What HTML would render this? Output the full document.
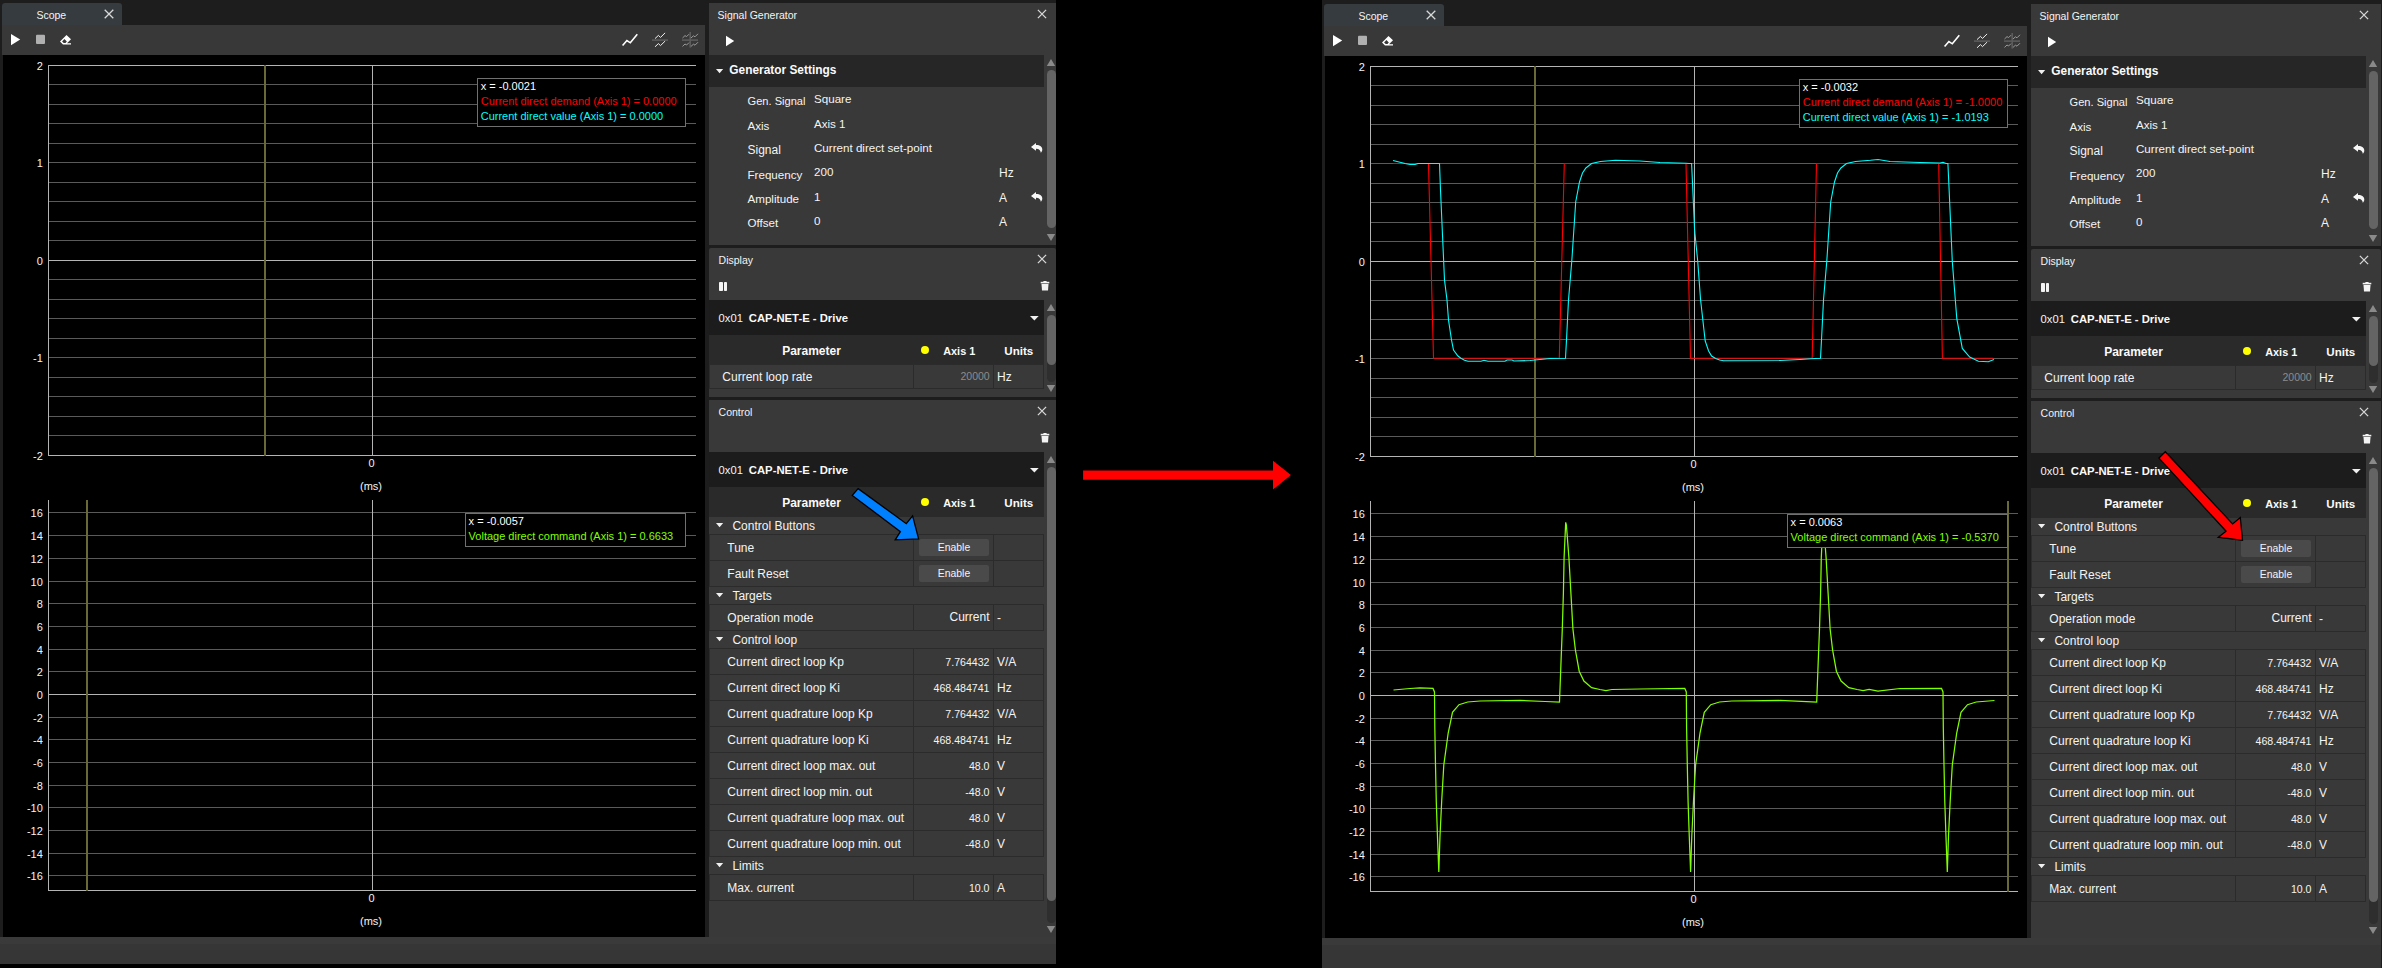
<!DOCTYPE html>
<html><head><meta charset="utf-8"><style>
html,body{margin:0;padding:0;background:#000;}
body{width:2382px;height:968px;position:relative;overflow:hidden;font-family:"Liberation Sans", sans-serif;}
div{position:absolute;box-sizing:border-box;}
.t{white-space:nowrap;}
svg{position:absolute;overflow:visible;}
</style></head><body>
<div style="left:0.00px;top:0.00px;width:1056.00px;height:964.00px;background:#1d1d1d;"></div><div style="left:0.00px;top:937.00px;width:1056.00px;height:7.00px;background:#3a3a3a;"></div><div style="left:0.00px;top:944.00px;width:1056.00px;height:20.00px;background:#363636;"></div><div style="left:2.00px;top:3.00px;width:120.00px;height:22.00px;background:#353b3e;border-radius:3px 3px 0 0;"></div><div class="t" style="left:36.40px;top:9.91px;font-size:10.5px;line-height:10.5px;color:#f4f4f4;">Scope</div><svg style="left:100px;top:5px;" width="18" height="18" viewBox="100 5 18 18"><path d="M104.7 9.7 L113.3 18.3 M113.3 9.7 L104.7 18.3" stroke="#d8d8d8" stroke-width="1.3"/></svg><div style="left:2.00px;top:25.00px;width:703.00px;height:30.00px;background:#383838;"></div><svg style="left:0px;top:25px;" width="100" height="30" viewBox="0 25 100 30"><path d="M11 34 L20.2 39.5 L11 45.2 Z" fill="#fff"/><rect x="36" y="34.7" width="9" height="9.4" rx="1" fill="#b0b0b0"/><path d="M60 41.4 L66.5 34.9 L71 39.3 L67 43.3 L71 43.3 L71 44.4 L63 44.4 Z" fill="#fff"/><path d="M62.1 41.4 L64.4 39.1 L66.8 41.5 L65.5 43 L63.7 43 Z" fill="#383838"/></svg><svg style="left:610px;top:25px;" width="95" height="30" viewBox="610 25 95 30"><path d="M622.6 45.6 L626.9 40.6 L630.3 42.8 L637.3 34.2" stroke="#fff" stroke-width="1.6" fill="none"/><rect x="652" y="39.3" width="16" height="1.6" fill="#5c5c5c"/><path d="M655 38.6 L658.4 35.4 L660.5 37.4 L665.1 32.9 M655 46.8 L658.4 43.6 L660.5 45.6 L665.1 41.1" stroke="#f0f0f0" stroke-width="1" fill="none"/><rect x="682" y="39.3" width="16" height="1.6" fill="#5c5c5c"/><rect x="689.4" y="32" width="1.6" height="15.6" fill="#5c5c5c"/><path d="M682.5 38 L685 35.6 L686.6 36.6 L689 34.2 M691 38 L693.4 35.8 L695 36.8 L698 33.8 M682.5 46.4 L685 44 L686.6 45 L689 42.6 M691 46.4 L693.4 44.2 L695 45.2 L698 42.2" stroke="#9a9a9a" stroke-width="1" fill="none"/></svg><div style="left:3.00px;top:55.00px;width:702.00px;height:882.00px;background:#000;"></div><div style="left:48.00px;top:84.00px;width:648.00px;height:1.00px;background:#5a5a5a;"></div><div style="left:48.00px;top:104.00px;width:648.00px;height:1.00px;background:#5a5a5a;"></div><div style="left:48.00px;top:123.00px;width:648.00px;height:1.00px;background:#5a5a5a;"></div><div style="left:48.00px;top:143.00px;width:648.00px;height:1.00px;background:#5a5a5a;"></div><div style="left:48.00px;top:162.00px;width:648.00px;height:1.00px;background:#5a5a5a;"></div><div style="left:48.00px;top:182.00px;width:648.00px;height:1.00px;background:#5a5a5a;"></div><div style="left:48.00px;top:201.00px;width:648.00px;height:1.00px;background:#5a5a5a;"></div><div style="left:48.00px;top:221.00px;width:648.00px;height:1.00px;background:#5a5a5a;"></div><div style="left:48.00px;top:240.00px;width:648.00px;height:1.00px;background:#5a5a5a;"></div><div style="left:48.00px;top:260.00px;width:648.00px;height:1.00px;background:#b4b4b4;"></div><div style="left:48.00px;top:279.00px;width:648.00px;height:1.00px;background:#5a5a5a;"></div><div style="left:48.00px;top:299.00px;width:648.00px;height:1.00px;background:#5a5a5a;"></div><div style="left:48.00px;top:318.00px;width:648.00px;height:1.00px;background:#5a5a5a;"></div><div style="left:48.00px;top:338.00px;width:648.00px;height:1.00px;background:#5a5a5a;"></div><div style="left:48.00px;top:357.00px;width:648.00px;height:1.00px;background:#5a5a5a;"></div><div style="left:48.00px;top:377.00px;width:648.00px;height:1.00px;background:#5a5a5a;"></div><div style="left:48.00px;top:396.00px;width:648.00px;height:1.00px;background:#5a5a5a;"></div><div style="left:48.00px;top:416.00px;width:648.00px;height:1.00px;background:#5a5a5a;"></div><div style="left:48.00px;top:435.00px;width:648.00px;height:1.00px;background:#5a5a5a;"></div><div style="left:48.00px;top:65.00px;width:648.00px;height:1.00px;background:#b4b4b4;"></div><div style="left:48.00px;top:455.00px;width:648.00px;height:1.00px;background:#b4b4b4;"></div><div style="left:48.00px;top:65.00px;width:1.00px;height:391.00px;background:#b4b4b4;"></div><div style="left:372.00px;top:65.00px;width:1.00px;height:391.00px;background:#b4b4b4;"></div><div class="t" style="left:-957.20px;width:1000px;text-align:right;top:60.99px;font-size:11px;line-height:11px;color:#f4f4f4;">2</div><div class="t" style="left:-957.20px;width:1000px;text-align:right;top:157.99px;font-size:11px;line-height:11px;color:#f4f4f4;">1</div><div class="t" style="left:-957.20px;width:1000px;text-align:right;top:255.99px;font-size:11px;line-height:11px;color:#f4f4f4;">0</div><div class="t" style="left:-957.20px;width:1000px;text-align:right;top:352.99px;font-size:11px;line-height:11px;color:#f4f4f4;">-1</div><div class="t" style="left:-957.20px;width:1000px;text-align:right;top:450.99px;font-size:11px;line-height:11px;color:#f4f4f4;">-2</div><div class="t" style="left:-128.50px;width:1000px;text-align:center;top:458.19px;font-size:11px;line-height:11px;color:#f4f4f4;">0</div><div class="t" style="left:-129.00px;width:1000px;text-align:center;top:481.19px;font-size:11px;line-height:11px;color:#f4f4f4;">(ms)</div><div style="left:48.00px;top:512.00px;width:648.00px;height:1.00px;background:#5a5a5a;"></div><div class="t" style="left:-957.20px;width:1000px;text-align:right;top:507.99px;font-size:11px;line-height:11px;color:#f4f4f4;">16</div><div style="left:48.00px;top:535.00px;width:648.00px;height:1.00px;background:#5a5a5a;"></div><div class="t" style="left:-957.20px;width:1000px;text-align:right;top:530.99px;font-size:11px;line-height:11px;color:#f4f4f4;">14</div><div style="left:48.00px;top:558.00px;width:648.00px;height:1.00px;background:#5a5a5a;"></div><div class="t" style="left:-957.20px;width:1000px;text-align:right;top:553.99px;font-size:11px;line-height:11px;color:#f4f4f4;">12</div><div style="left:48.00px;top:581.00px;width:648.00px;height:1.00px;background:#5a5a5a;"></div><div class="t" style="left:-957.20px;width:1000px;text-align:right;top:576.99px;font-size:11px;line-height:11px;color:#f4f4f4;">10</div><div style="left:48.00px;top:603.00px;width:648.00px;height:1.00px;background:#5a5a5a;"></div><div class="t" style="left:-957.20px;width:1000px;text-align:right;top:598.99px;font-size:11px;line-height:11px;color:#f4f4f4;">8</div><div style="left:48.00px;top:626.00px;width:648.00px;height:1.00px;background:#5a5a5a;"></div><div class="t" style="left:-957.20px;width:1000px;text-align:right;top:621.99px;font-size:11px;line-height:11px;color:#f4f4f4;">6</div><div style="left:48.00px;top:649.00px;width:648.00px;height:1.00px;background:#5a5a5a;"></div><div class="t" style="left:-957.20px;width:1000px;text-align:right;top:644.99px;font-size:11px;line-height:11px;color:#f4f4f4;">4</div><div style="left:48.00px;top:671.00px;width:648.00px;height:1.00px;background:#5a5a5a;"></div><div class="t" style="left:-957.20px;width:1000px;text-align:right;top:666.99px;font-size:11px;line-height:11px;color:#f4f4f4;">2</div><div style="left:48.00px;top:694.00px;width:648.00px;height:1.00px;background:#b4b4b4;"></div><div class="t" style="left:-957.20px;width:1000px;text-align:right;top:689.99px;font-size:11px;line-height:11px;color:#f4f4f4;">0</div><div style="left:48.00px;top:717.00px;width:648.00px;height:1.00px;background:#5a5a5a;"></div><div class="t" style="left:-957.20px;width:1000px;text-align:right;top:712.99px;font-size:11px;line-height:11px;color:#f4f4f4;">-2</div><div style="left:48.00px;top:739.00px;width:648.00px;height:1.00px;background:#5a5a5a;"></div><div class="t" style="left:-957.20px;width:1000px;text-align:right;top:734.99px;font-size:11px;line-height:11px;color:#f4f4f4;">-4</div><div style="left:48.00px;top:762.00px;width:648.00px;height:1.00px;background:#5a5a5a;"></div><div class="t" style="left:-957.20px;width:1000px;text-align:right;top:757.99px;font-size:11px;line-height:11px;color:#f4f4f4;">-6</div><div style="left:48.00px;top:785.00px;width:648.00px;height:1.00px;background:#5a5a5a;"></div><div class="t" style="left:-957.20px;width:1000px;text-align:right;top:780.99px;font-size:11px;line-height:11px;color:#f4f4f4;">-8</div><div style="left:48.00px;top:807.00px;width:648.00px;height:1.00px;background:#5a5a5a;"></div><div class="t" style="left:-957.20px;width:1000px;text-align:right;top:802.99px;font-size:11px;line-height:11px;color:#f4f4f4;">-10</div><div style="left:48.00px;top:830.00px;width:648.00px;height:1.00px;background:#5a5a5a;"></div><div class="t" style="left:-957.20px;width:1000px;text-align:right;top:825.99px;font-size:11px;line-height:11px;color:#f4f4f4;">-12</div><div style="left:48.00px;top:853.00px;width:648.00px;height:1.00px;background:#5a5a5a;"></div><div class="t" style="left:-957.20px;width:1000px;text-align:right;top:848.99px;font-size:11px;line-height:11px;color:#f4f4f4;">-14</div><div style="left:48.00px;top:875.00px;width:648.00px;height:1.00px;background:#5a5a5a;"></div><div class="t" style="left:-957.20px;width:1000px;text-align:right;top:870.99px;font-size:11px;line-height:11px;color:#f4f4f4;">-16</div><div style="left:48.00px;top:890.00px;width:648.00px;height:1.00px;background:#b4b4b4;"></div><div style="left:48.00px;top:500.00px;width:1.00px;height:391.00px;background:#b4b4b4;"></div><div style="left:372.00px;top:500.00px;width:1.00px;height:391.00px;background:#b4b4b4;"></div><div class="t" style="left:-128.50px;width:1000px;text-align:center;top:893.19px;font-size:11px;line-height:11px;color:#f4f4f4;">0</div><div class="t" style="left:-129.00px;width:1000px;text-align:center;top:916.19px;font-size:11px;line-height:11px;color:#f4f4f4;">(ms)</div><div style="left:264.00px;top:65.00px;width:2.00px;height:391.00px;background:#6a6a36;"></div><div style="left:86.00px;top:500.00px;width:2.00px;height:391.00px;background:#6a6a36;"></div><div style="left:709.00px;top:3.00px;width:347.00px;height:242.00px;background:#393939;"></div><div style="left:709.00px;top:248.00px;width:347.00px;height:149.00px;background:#393939;border-radius:2px 2px 0 0;"></div><div style="left:709.00px;top:400.00px;width:347.00px;height:537.00px;background:#393939;"></div><div class="t" style="left:717.60px;top:9.81px;font-size:10.5px;line-height:10.5px;color:#f4f4f4;">Signal Generator</div><svg style="left:1035.9px;top:7.9px;" width="12" height="12" viewBox="1035.9 7.9 12 12"><path d="M1037.8000000000002 9.8 L1046.0 18.0 M1046.0 9.8 L1037.8000000000002 18.0" stroke="#d8d8d8" stroke-width="1.3"/></svg><svg style="left:724px;top:34px;" width="12" height="14" viewBox="724 34 12 14"><path d="M726 35.8 L734.2 41 L726 46.2 Z" fill="#fff"/></svg><div style="left:709.00px;top:55.00px;width:335.00px;height:32.00px;background:#262626;"></div><svg style="left:715px;top:68.3px;" width="9.2" height="6.2" viewBox="715 68.3 9.2 6.2"><path d="M716 69.3 L723.2 69.3 L719.6 73.5 Z" fill="#f0f0f0"/></svg><div class="t" style="left:729.30px;top:64.73px;font-size:11.9px;line-height:11.9px;color:#fafafa;font-weight:bold;">Generator Settings</div><div class="t" style="left:747.50px;top:96.30px;font-size:11.1px;line-height:11.1px;color:#f4f4f4;">Gen. Signal</div><div class="t" style="left:814.00px;top:93.48px;font-size:11.6px;line-height:11.6px;color:#f4f4f4;">Square</div><div class="t" style="left:747.50px;top:120.18px;font-size:11.6px;line-height:11.6px;color:#f4f4f4;">Axis</div><div class="t" style="left:814.00px;top:117.78px;font-size:11.6px;line-height:11.6px;color:#f4f4f4;">Axis 1</div><div class="t" style="left:747.50px;top:144.14px;font-size:12px;line-height:12px;color:#f4f4f4;">Signal</div><div class="t" style="left:814.00px;top:142.08px;font-size:11.6px;line-height:11.6px;color:#f4f4f4;">Current direct set-point</div><div class="t" style="left:747.50px;top:168.78px;font-size:11.6px;line-height:11.6px;color:#f4f4f4;">Frequency</div><div class="t" style="left:814.00px;top:166.38px;font-size:11.6px;line-height:11.6px;color:#f4f4f4;">200</div><div class="t" style="left:999.10px;top:167.24px;font-size:12px;line-height:12px;color:#f4f4f4;">Hz</div><div class="t" style="left:747.50px;top:193.08px;font-size:11.6px;line-height:11.6px;color:#f4f4f4;">Amplitude</div><div class="t" style="left:814.00px;top:190.68px;font-size:11.6px;line-height:11.6px;color:#f4f4f4;">1</div><div class="t" style="left:999.10px;top:191.54px;font-size:12px;line-height:12px;color:#f4f4f4;">A</div><div class="t" style="left:747.50px;top:217.38px;font-size:11.6px;line-height:11.6px;color:#f4f4f4;">Offset</div><div class="t" style="left:814.00px;top:214.98px;font-size:11.6px;line-height:11.6px;color:#f4f4f4;">0</div><div class="t" style="left:999.10px;top:215.84px;font-size:12px;line-height:12px;color:#f4f4f4;">A</div><svg style="left:1029.7px;top:141.5px;" width="14" height="12" viewBox="1029.7 141.5 14 12"><path d="M1030.7 146.5 L1035.7 142.5 L1035.7 144.4 C1039.5 144.3 1042.2 146.0 1042.0 149.2 C1041.9 150.5 1041.2 151.5 1040.5 152.3 C1040.3 150.0 1039.0 148.2 1035.7 148.2 L1035.7 150.2 Z" fill="#f8f8f8"/></svg><svg style="left:1029.7px;top:190.5px;" width="14" height="12" viewBox="1029.7 190.5 14 12"><path d="M1030.7 195.5 L1035.7 191.5 L1035.7 193.4 C1039.5 193.3 1042.2 195.0 1042.0 198.2 C1041.9 199.5 1041.2 200.5 1040.5 201.3 C1040.3 199.0 1039.0 197.2 1035.7 197.2 L1035.7 199.2 Z" fill="#f8f8f8"/></svg><svg style="left:1045px;top:58.3px;" width="12" height="9" viewBox="1045 58.3 12 9"><path d="M1046.8 66.3 L1055.2 66.3 L1051 59.3 Z" fill="#8a8a8a"/></svg><div style="left:1047.00px;top:69.80px;width:9.00px;height:158.20px;background:#646464;border-radius:4.5px;"></div><svg style="left:1045px;top:232.5px;" width="12" height="9" viewBox="1045 232.5 12 9"><path d="M1046.8 233.5 L1055.2 233.5 L1051 240.5 Z" fill="#8a8a8a"/></svg><div class="t" style="left:718.60px;top:255.11px;font-size:10.5px;line-height:10.5px;color:#f4f4f4;">Display</div><svg style="left:1035.8px;top:253.39999999999998px;" width="12" height="12" viewBox="1035.8 253.39999999999998 12 12"><path d="M1037.7 255.29999999999998 L1045.8999999999999 263.5 M1045.8999999999999 255.29999999999998 L1037.7 263.5" stroke="#d8d8d8" stroke-width="1.3"/></svg><div style="left:719.00px;top:281.60px;width:3.60px;height:9.00px;background:#f4f4f4;border-radius:0.8px;"></div><div style="left:723.70px;top:281.60px;width:3.60px;height:9.00px;background:#f4f4f4;border-radius:0.8px;"></div><svg style="left:1038.7px;top:280.2px;" width="12" height="12" viewBox="1038.7 280.2 12 12"><rect x="1040.4" y="282.0" width="8.6" height="1.6" fill="#f4f4f4"/><rect x="1043.1000000000001" y="281.2" width="3.2" height="1.2" fill="#f4f4f4"/><path d="M1041.2 284.2 L1048.2 284.2 L1047.7 290.8 L1041.7 290.8 Z" fill="#f4f4f4"/></svg><div style="left:709.00px;top:300.00px;width:335.00px;height:34.50px;background:#1c1c1c;"></div><div class="t" style="left:718.60px;top:312.62px;font-size:11.2px;line-height:11.2px;color:#f4f4f4;">0x01</div><div class="t" style="left:748.80px;top:312.53px;font-size:11.3px;line-height:11.3px;color:#fafafa;font-weight:bold;">CAP-NET-E - Drive</div><svg style="left:1028.8px;top:314.9px;" width="10.7" height="6.4" viewBox="1028.8 314.9 10.7 6.4"><path d="M1029.8 315.9 L1038.5 315.9 L1034.1499999999999 320.29999999999995 Z" fill="#f0f0f0"/></svg><div style="left:709.00px;top:335.00px;width:335.00px;height:29.50px;background:#2a2a2a;"></div><div class="t" style="left:311.50px;width:1000px;text-align:center;top:344.64px;font-size:12px;line-height:12px;color:#fafafa;font-weight:bold;">Parameter</div><div style="left:920.6px;top:345.8px;width:8.6px;height:8.6px;border-radius:50%;background:#ffff00;"></div><div class="t" style="left:943.20px;top:345.57px;font-size:10.9px;line-height:10.9px;color:#fafafa;font-weight:bold;">Axis 1</div><div class="t" style="left:1004.30px;top:344.98px;font-size:11.6px;line-height:11.6px;color:#fafafa;font-weight:bold;">Units</div><div style="left:709.00px;top:364.00px;width:335.00px;height:25.00px;background:#2b2b2b;"></div><div style="left:710.00px;top:365.00px;width:203.00px;height:23.00px;background:#393939;"></div><div style="left:914.00px;top:365.00px;width:79.00px;height:23.00px;background:#393939;"></div><div style="left:994.00px;top:365.00px;width:49.00px;height:23.00px;background:#393939;"></div><div class="t" style="left:722.30px;top:370.64px;font-size:12px;line-height:12px;color:#f4f4f4;">Current loop rate</div><div class="t" style="left:-10.30px;width:1000px;text-align:right;top:371.41px;font-size:10.5px;line-height:10.5px;color:#8c8c8c;">20000</div><div class="t" style="left:997.10px;top:370.64px;font-size:12px;line-height:12px;color:#f4f4f4;">Hz</div><svg style="left:1045px;top:302.8px;" width="12" height="9" viewBox="1045 302.8 12 9"><path d="M1046.8 310.8 L1055.2 310.8 L1051 303.8 Z" fill="#8a8a8a"/></svg><div style="left:1047.00px;top:314.80px;width:9.00px;height:67.20px;background:#2e2e2e;border-radius:4.5px;"></div><div style="left:1047.00px;top:314.80px;width:9.00px;height:50.20px;background:#646464;border-radius:4.5px;"></div><svg style="left:1045px;top:384px;" width="12" height="9" viewBox="1045 384 12 9"><path d="M1046.8 385 L1055.2 385 L1051 392 Z" fill="#8a8a8a"/></svg><div class="t" style="left:718.60px;top:407.21px;font-size:10.5px;line-height:10.5px;color:#f4f4f4;">Control</div><svg style="left:1035.8px;top:405.1px;" width="12" height="12" viewBox="1035.8 405.1 12 12"><path d="M1037.7 407.0 L1045.8999999999999 415.20000000000005 M1045.8999999999999 407.0 L1037.7 415.20000000000005" stroke="#d8d8d8" stroke-width="1.3"/></svg><svg style="left:1038.7px;top:432.2px;" width="12" height="12" viewBox="1038.7 432.2 12 12"><rect x="1040.4" y="434.0" width="8.6" height="1.6" fill="#f4f4f4"/><rect x="1043.1000000000001" y="433.2" width="3.2" height="1.2" fill="#f4f4f4"/><path d="M1041.2 436.2 L1048.2 436.2 L1047.7 442.8 L1041.7 442.8 Z" fill="#f4f4f4"/></svg><div style="left:709.00px;top:452.00px;width:335.00px;height:34.50px;background:#1c1c1c;"></div><div class="t" style="left:718.60px;top:464.62px;font-size:11.2px;line-height:11.2px;color:#f4f4f4;">0x01</div><div class="t" style="left:748.80px;top:464.53px;font-size:11.3px;line-height:11.3px;color:#fafafa;font-weight:bold;">CAP-NET-E - Drive</div><svg style="left:1028.8px;top:466.9px;" width="10.7" height="6.4" viewBox="1028.8 466.9 10.7 6.4"><path d="M1029.8 467.9 L1038.5 467.9 L1034.1499999999999 472.29999999999995 Z" fill="#f0f0f0"/></svg><div style="left:709.00px;top:487.00px;width:335.00px;height:29.50px;background:#2a2a2a;"></div><div class="t" style="left:311.50px;width:1000px;text-align:center;top:496.64px;font-size:12px;line-height:12px;color:#fafafa;font-weight:bold;">Parameter</div><div style="left:920.6px;top:497.8px;width:8.6px;height:8.6px;border-radius:50%;background:#ffff00;"></div><div class="t" style="left:943.20px;top:497.57px;font-size:10.9px;line-height:10.9px;color:#fafafa;font-weight:bold;">Axis 1</div><div class="t" style="left:1004.30px;top:496.98px;font-size:11.6px;line-height:11.6px;color:#fafafa;font-weight:bold;">Units</div><svg style="left:715px;top:522px;" width="9.2" height="6.2" viewBox="715 522 9.2 6.2"><path d="M716 523 L723.2 523 L719.6 527.2 Z" fill="#f0f0f0"/></svg><div class="t" style="left:732.40px;top:519.74px;font-size:12px;line-height:12px;color:#f4f4f4;">Control Buttons</div><div style="left:709.00px;top:534.00px;width:335.00px;height:27.00px;background:#2b2b2b;"></div><div style="left:710.00px;top:535.00px;width:203.00px;height:25.00px;background:#393939;"></div><div style="left:914.00px;top:535.00px;width:79.00px;height:25.00px;background:#393939;"></div><div style="left:994.00px;top:535.00px;width:49.00px;height:25.00px;background:#393939;"></div><div class="t" style="left:727.30px;top:541.74px;font-size:12px;line-height:12px;color:#f4f4f4;">Tune</div><div style="left:919.00px;top:539.00px;width:70.00px;height:16.80px;background:#4a4a4a;border-radius:2px;"></div><div class="t" style="left:454.00px;width:1000px;text-align:center;top:542.80px;font-size:10.4px;line-height:10.4px;color:#f4f4f4;">Enable</div><div style="left:709.00px;top:560.00px;width:335.00px;height:27.00px;background:#2b2b2b;"></div><div style="left:710.00px;top:561.00px;width:203.00px;height:25.00px;background:#393939;"></div><div style="left:914.00px;top:561.00px;width:79.00px;height:25.00px;background:#393939;"></div><div style="left:994.00px;top:561.00px;width:49.00px;height:25.00px;background:#393939;"></div><div class="t" style="left:727.30px;top:567.74px;font-size:12px;line-height:12px;color:#f4f4f4;">Fault Reset</div><div style="left:919.00px;top:565.00px;width:70.00px;height:16.80px;background:#4a4a4a;border-radius:2px;"></div><div class="t" style="left:454.00px;width:1000px;text-align:center;top:568.80px;font-size:10.4px;line-height:10.4px;color:#f4f4f4;">Enable</div><svg style="left:715px;top:592px;" width="9.2" height="6.2" viewBox="715 592 9.2 6.2"><path d="M716 593 L723.2 593 L719.6 597.2 Z" fill="#f0f0f0"/></svg><div class="t" style="left:732.40px;top:589.74px;font-size:12px;line-height:12px;color:#f4f4f4;">Targets</div><div style="left:709.00px;top:604.00px;width:335.00px;height:27.00px;background:#2b2b2b;"></div><div style="left:710.00px;top:605.00px;width:203.00px;height:25.00px;background:#393939;"></div><div style="left:914.00px;top:605.00px;width:79.00px;height:25.00px;background:#393939;"></div><div style="left:994.00px;top:605.00px;width:49.00px;height:25.00px;background:#393939;"></div><div class="t" style="left:727.30px;top:611.74px;font-size:12px;line-height:12px;color:#f4f4f4;">Operation mode</div><div class="t" style="left:-10.50px;width:1000px;text-align:right;top:611.44px;font-size:12px;line-height:12px;color:#f4f4f4;">Current</div><div class="t" style="left:997.00px;top:611.74px;font-size:12px;line-height:12px;color:#f4f4f4;">-</div><svg style="left:715px;top:636px;" width="9.2" height="6.2" viewBox="715 636 9.2 6.2"><path d="M716 637 L723.2 637 L719.6 641.2 Z" fill="#f0f0f0"/></svg><div class="t" style="left:732.40px;top:633.74px;font-size:12px;line-height:12px;color:#f4f4f4;">Control loop</div><div style="left:709.00px;top:648.00px;width:335.00px;height:27.00px;background:#2b2b2b;"></div><div style="left:710.00px;top:649.00px;width:203.00px;height:25.00px;background:#393939;"></div><div style="left:914.00px;top:649.00px;width:79.00px;height:25.00px;background:#393939;"></div><div style="left:994.00px;top:649.00px;width:49.00px;height:25.00px;background:#393939;"></div><div class="t" style="left:727.30px;top:655.74px;font-size:12px;line-height:12px;color:#f4f4f4;">Current direct loop Kp</div><div class="t" style="left:-10.50px;width:1000px;text-align:right;top:656.63px;font-size:10.6px;line-height:10.6px;color:#f4f4f4;">7.764432</div><div class="t" style="left:997.00px;top:655.74px;font-size:12px;line-height:12px;color:#f4f4f4;">V/A</div><div style="left:709.00px;top:674.00px;width:335.00px;height:27.00px;background:#2b2b2b;"></div><div style="left:710.00px;top:675.00px;width:203.00px;height:25.00px;background:#393939;"></div><div style="left:914.00px;top:675.00px;width:79.00px;height:25.00px;background:#393939;"></div><div style="left:994.00px;top:675.00px;width:49.00px;height:25.00px;background:#393939;"></div><div class="t" style="left:727.30px;top:681.74px;font-size:12px;line-height:12px;color:#f4f4f4;">Current direct loop Ki</div><div class="t" style="left:-10.50px;width:1000px;text-align:right;top:682.63px;font-size:10.6px;line-height:10.6px;color:#f4f4f4;">468.484741</div><div class="t" style="left:997.00px;top:681.74px;font-size:12px;line-height:12px;color:#f4f4f4;">Hz</div><div style="left:709.00px;top:700.00px;width:335.00px;height:27.00px;background:#2b2b2b;"></div><div style="left:710.00px;top:701.00px;width:203.00px;height:25.00px;background:#393939;"></div><div style="left:914.00px;top:701.00px;width:79.00px;height:25.00px;background:#393939;"></div><div style="left:994.00px;top:701.00px;width:49.00px;height:25.00px;background:#393939;"></div><div class="t" style="left:727.30px;top:707.74px;font-size:12px;line-height:12px;color:#f4f4f4;">Current quadrature loop Kp</div><div class="t" style="left:-10.50px;width:1000px;text-align:right;top:708.63px;font-size:10.6px;line-height:10.6px;color:#f4f4f4;">7.764432</div><div class="t" style="left:997.00px;top:707.74px;font-size:12px;line-height:12px;color:#f4f4f4;">V/A</div><div style="left:709.00px;top:726.00px;width:335.00px;height:27.00px;background:#2b2b2b;"></div><div style="left:710.00px;top:727.00px;width:203.00px;height:25.00px;background:#393939;"></div><div style="left:914.00px;top:727.00px;width:79.00px;height:25.00px;background:#393939;"></div><div style="left:994.00px;top:727.00px;width:49.00px;height:25.00px;background:#393939;"></div><div class="t" style="left:727.30px;top:733.74px;font-size:12px;line-height:12px;color:#f4f4f4;">Current quadrature loop Ki</div><div class="t" style="left:-10.50px;width:1000px;text-align:right;top:734.63px;font-size:10.6px;line-height:10.6px;color:#f4f4f4;">468.484741</div><div class="t" style="left:997.00px;top:733.74px;font-size:12px;line-height:12px;color:#f4f4f4;">Hz</div><div style="left:709.00px;top:752.00px;width:335.00px;height:27.00px;background:#2b2b2b;"></div><div style="left:710.00px;top:753.00px;width:203.00px;height:25.00px;background:#393939;"></div><div style="left:914.00px;top:753.00px;width:79.00px;height:25.00px;background:#393939;"></div><div style="left:994.00px;top:753.00px;width:49.00px;height:25.00px;background:#393939;"></div><div class="t" style="left:727.30px;top:759.74px;font-size:12px;line-height:12px;color:#f4f4f4;">Current direct loop max. out</div><div class="t" style="left:-10.50px;width:1000px;text-align:right;top:760.63px;font-size:10.6px;line-height:10.6px;color:#f4f4f4;">48.0</div><div class="t" style="left:997.00px;top:759.74px;font-size:12px;line-height:12px;color:#f4f4f4;">V</div><div style="left:709.00px;top:778.00px;width:335.00px;height:27.00px;background:#2b2b2b;"></div><div style="left:710.00px;top:779.00px;width:203.00px;height:25.00px;background:#393939;"></div><div style="left:914.00px;top:779.00px;width:79.00px;height:25.00px;background:#393939;"></div><div style="left:994.00px;top:779.00px;width:49.00px;height:25.00px;background:#393939;"></div><div class="t" style="left:727.30px;top:785.74px;font-size:12px;line-height:12px;color:#f4f4f4;">Current direct loop min. out</div><div class="t" style="left:-10.50px;width:1000px;text-align:right;top:786.63px;font-size:10.6px;line-height:10.6px;color:#f4f4f4;">-48.0</div><div class="t" style="left:997.00px;top:785.74px;font-size:12px;line-height:12px;color:#f4f4f4;">V</div><div style="left:709.00px;top:804.00px;width:335.00px;height:27.00px;background:#2b2b2b;"></div><div style="left:710.00px;top:805.00px;width:203.00px;height:25.00px;background:#393939;"></div><div style="left:914.00px;top:805.00px;width:79.00px;height:25.00px;background:#393939;"></div><div style="left:994.00px;top:805.00px;width:49.00px;height:25.00px;background:#393939;"></div><div class="t" style="left:727.30px;top:811.74px;font-size:12px;line-height:12px;color:#f4f4f4;">Current quadrature loop max. out</div><div class="t" style="left:-10.50px;width:1000px;text-align:right;top:812.63px;font-size:10.6px;line-height:10.6px;color:#f4f4f4;">48.0</div><div class="t" style="left:997.00px;top:811.74px;font-size:12px;line-height:12px;color:#f4f4f4;">V</div><div style="left:709.00px;top:830.00px;width:335.00px;height:27.00px;background:#2b2b2b;"></div><div style="left:710.00px;top:831.00px;width:203.00px;height:25.00px;background:#393939;"></div><div style="left:914.00px;top:831.00px;width:79.00px;height:25.00px;background:#393939;"></div><div style="left:994.00px;top:831.00px;width:49.00px;height:25.00px;background:#393939;"></div><div class="t" style="left:727.30px;top:837.74px;font-size:12px;line-height:12px;color:#f4f4f4;">Current quadrature loop min. out</div><div class="t" style="left:-10.50px;width:1000px;text-align:right;top:838.63px;font-size:10.6px;line-height:10.6px;color:#f4f4f4;">-48.0</div><div class="t" style="left:997.00px;top:837.74px;font-size:12px;line-height:12px;color:#f4f4f4;">V</div><svg style="left:715px;top:862px;" width="9.2" height="6.2" viewBox="715 862 9.2 6.2"><path d="M716 863 L723.2 863 L719.6 867.2 Z" fill="#f0f0f0"/></svg><div class="t" style="left:732.40px;top:859.74px;font-size:12px;line-height:12px;color:#f4f4f4;">Limits</div><div style="left:709.00px;top:874.00px;width:335.00px;height:27.00px;background:#2b2b2b;"></div><div style="left:710.00px;top:875.00px;width:203.00px;height:25.00px;background:#393939;"></div><div style="left:914.00px;top:875.00px;width:79.00px;height:25.00px;background:#393939;"></div><div style="left:994.00px;top:875.00px;width:49.00px;height:25.00px;background:#393939;"></div><div class="t" style="left:727.30px;top:881.74px;font-size:12px;line-height:12px;color:#f4f4f4;">Max. current</div><div class="t" style="left:-10.50px;width:1000px;text-align:right;top:882.63px;font-size:10.6px;line-height:10.6px;color:#f4f4f4;">10.0</div><div class="t" style="left:997.00px;top:881.74px;font-size:12px;line-height:12px;color:#f4f4f4;">A</div><svg style="left:1045px;top:455.2px;" width="12" height="9" viewBox="1045 455.2 12 9"><path d="M1046.8 463.2 L1055.2 463.2 L1051 456.2 Z" fill="#8a8a8a"/></svg><div style="left:1047.00px;top:467.00px;width:9.00px;height:455.70px;background:#2e2e2e;border-radius:4.5px;"></div><div style="left:1047.00px;top:467.00px;width:9.00px;height:434.00px;background:#646464;border-radius:4.5px;"></div><svg style="left:1045px;top:925px;" width="12" height="9" viewBox="1045 925 12 9"><path d="M1046.8 926 L1055.2 926 L1051 933 Z" fill="#8a8a8a"/></svg><div style="left:477.00px;top:78.00px;width:209.00px;height:49.00px;background:#000;border:1px solid #707070;"></div><div class="t" style="left:480.70px;top:80.69px;font-size:11px;line-height:11px;color:#ffffff;">x = -0.0021</div><div class="t" style="left:480.70px;top:95.69px;font-size:11px;line-height:11px;color:#ff0000;">Current direct demand (Axis 1) = 0.0000</div><div class="t" style="left:480.70px;top:110.69px;font-size:11px;line-height:11px;color:#00ffff;">Current direct value (Axis 1) = 0.0000</div><div style="left:465.00px;top:513.00px;width:221.00px;height:34.00px;background:#000;border:1px solid #707070;"></div><div class="t" style="left:468.60px;top:515.69px;font-size:11px;line-height:11px;color:#ffffff;">x = -0.0057</div><div class="t" style="left:468.60px;top:530.69px;font-size:11px;line-height:11px;color:#80ff00;">Voltage direct command (Axis 1) = 0.6633</div><div style="left:1322.00px;top:0.00px;width:1060.00px;height:968.00px;background:#1d1d1d;"></div><div style="left:1322.00px;top:938.00px;width:1059.00px;height:7.00px;background:#3a3a3a;"></div><div style="left:1322.00px;top:945.00px;width:1059.00px;height:23.00px;background:#363636;"></div><div style="left:1324.00px;top:4.00px;width:120.00px;height:22.00px;background:#353b3e;border-radius:3px 3px 0 0;"></div><div class="t" style="left:1358.40px;top:10.91px;font-size:10.5px;line-height:10.5px;color:#f4f4f4;">Scope</div><svg style="left:1422px;top:6px;" width="18" height="18" viewBox="100 5 18 18"><path d="M104.7 9.7 L113.3 18.3 M113.3 9.7 L104.7 18.3" stroke="#d8d8d8" stroke-width="1.3"/></svg><div style="left:1324.00px;top:26.00px;width:703.00px;height:30.00px;background:#383838;"></div><svg style="left:1322px;top:26px;" width="100" height="30" viewBox="0 25 100 30"><path d="M11 34 L20.2 39.5 L11 45.2 Z" fill="#fff"/><rect x="36" y="34.7" width="9" height="9.4" rx="1" fill="#b0b0b0"/><path d="M60 41.4 L66.5 34.9 L71 39.3 L67 43.3 L71 43.3 L71 44.4 L63 44.4 Z" fill="#fff"/><path d="M62.1 41.4 L64.4 39.1 L66.8 41.5 L65.5 43 L63.7 43 Z" fill="#383838"/></svg><svg style="left:1932px;top:26px;" width="95" height="30" viewBox="610 25 95 30"><path d="M622.6 45.6 L626.9 40.6 L630.3 42.8 L637.3 34.2" stroke="#fff" stroke-width="1.6" fill="none"/><rect x="652" y="39.3" width="16" height="1.6" fill="#5c5c5c"/><path d="M655 38.6 L658.4 35.4 L660.5 37.4 L665.1 32.9 M655 46.8 L658.4 43.6 L660.5 45.6 L665.1 41.1" stroke="#f0f0f0" stroke-width="1" fill="none"/><rect x="682" y="39.3" width="16" height="1.6" fill="#5c5c5c"/><rect x="689.4" y="32" width="1.6" height="15.6" fill="#5c5c5c"/><path d="M682.5 38 L685 35.6 L686.6 36.6 L689 34.2 M691 38 L693.4 35.8 L695 36.8 L698 33.8 M682.5 46.4 L685 44 L686.6 45 L689 42.6 M691 46.4 L693.4 44.2 L695 45.2 L698 42.2" stroke="#9a9a9a" stroke-width="1" fill="none"/></svg><div style="left:1325.00px;top:56.00px;width:702.00px;height:882.00px;background:#000;"></div><div style="left:1370.00px;top:85.00px;width:648.00px;height:1.00px;background:#5a5a5a;"></div><div style="left:1370.00px;top:105.00px;width:648.00px;height:1.00px;background:#5a5a5a;"></div><div style="left:1370.00px;top:124.00px;width:648.00px;height:1.00px;background:#5a5a5a;"></div><div style="left:1370.00px;top:144.00px;width:648.00px;height:1.00px;background:#5a5a5a;"></div><div style="left:1370.00px;top:163.00px;width:648.00px;height:1.00px;background:#5a5a5a;"></div><div style="left:1370.00px;top:183.00px;width:648.00px;height:1.00px;background:#5a5a5a;"></div><div style="left:1370.00px;top:202.00px;width:648.00px;height:1.00px;background:#5a5a5a;"></div><div style="left:1370.00px;top:222.00px;width:648.00px;height:1.00px;background:#5a5a5a;"></div><div style="left:1370.00px;top:241.00px;width:648.00px;height:1.00px;background:#5a5a5a;"></div><div style="left:1370.00px;top:261.00px;width:648.00px;height:1.00px;background:#b4b4b4;"></div><div style="left:1370.00px;top:280.00px;width:648.00px;height:1.00px;background:#5a5a5a;"></div><div style="left:1370.00px;top:300.00px;width:648.00px;height:1.00px;background:#5a5a5a;"></div><div style="left:1370.00px;top:319.00px;width:648.00px;height:1.00px;background:#5a5a5a;"></div><div style="left:1370.00px;top:339.00px;width:648.00px;height:1.00px;background:#5a5a5a;"></div><div style="left:1370.00px;top:358.00px;width:648.00px;height:1.00px;background:#5a5a5a;"></div><div style="left:1370.00px;top:378.00px;width:648.00px;height:1.00px;background:#5a5a5a;"></div><div style="left:1370.00px;top:397.00px;width:648.00px;height:1.00px;background:#5a5a5a;"></div><div style="left:1370.00px;top:417.00px;width:648.00px;height:1.00px;background:#5a5a5a;"></div><div style="left:1370.00px;top:436.00px;width:648.00px;height:1.00px;background:#5a5a5a;"></div><div style="left:1370.00px;top:66.00px;width:648.00px;height:1.00px;background:#b4b4b4;"></div><div style="left:1370.00px;top:456.00px;width:648.00px;height:1.00px;background:#b4b4b4;"></div><div style="left:1370.00px;top:66.00px;width:1.00px;height:391.00px;background:#b4b4b4;"></div><div style="left:1694.00px;top:66.00px;width:1.00px;height:391.00px;background:#b4b4b4;"></div><div class="t" style="left:364.80px;width:1000px;text-align:right;top:61.99px;font-size:11px;line-height:11px;color:#f4f4f4;">2</div><div class="t" style="left:364.80px;width:1000px;text-align:right;top:158.99px;font-size:11px;line-height:11px;color:#f4f4f4;">1</div><div class="t" style="left:364.80px;width:1000px;text-align:right;top:256.99px;font-size:11px;line-height:11px;color:#f4f4f4;">0</div><div class="t" style="left:364.80px;width:1000px;text-align:right;top:353.99px;font-size:11px;line-height:11px;color:#f4f4f4;">-1</div><div class="t" style="left:364.80px;width:1000px;text-align:right;top:451.99px;font-size:11px;line-height:11px;color:#f4f4f4;">-2</div><div class="t" style="left:1193.50px;width:1000px;text-align:center;top:459.19px;font-size:11px;line-height:11px;color:#f4f4f4;">0</div><div class="t" style="left:1193.00px;width:1000px;text-align:center;top:482.19px;font-size:11px;line-height:11px;color:#f4f4f4;">(ms)</div><div style="left:1370.00px;top:513.00px;width:648.00px;height:1.00px;background:#5a5a5a;"></div><div class="t" style="left:364.80px;width:1000px;text-align:right;top:508.99px;font-size:11px;line-height:11px;color:#f4f4f4;">16</div><div style="left:1370.00px;top:536.00px;width:648.00px;height:1.00px;background:#5a5a5a;"></div><div class="t" style="left:364.80px;width:1000px;text-align:right;top:531.99px;font-size:11px;line-height:11px;color:#f4f4f4;">14</div><div style="left:1370.00px;top:559.00px;width:648.00px;height:1.00px;background:#5a5a5a;"></div><div class="t" style="left:364.80px;width:1000px;text-align:right;top:554.99px;font-size:11px;line-height:11px;color:#f4f4f4;">12</div><div style="left:1370.00px;top:582.00px;width:648.00px;height:1.00px;background:#5a5a5a;"></div><div class="t" style="left:364.80px;width:1000px;text-align:right;top:577.99px;font-size:11px;line-height:11px;color:#f4f4f4;">10</div><div style="left:1370.00px;top:604.00px;width:648.00px;height:1.00px;background:#5a5a5a;"></div><div class="t" style="left:364.80px;width:1000px;text-align:right;top:599.99px;font-size:11px;line-height:11px;color:#f4f4f4;">8</div><div style="left:1370.00px;top:627.00px;width:648.00px;height:1.00px;background:#5a5a5a;"></div><div class="t" style="left:364.80px;width:1000px;text-align:right;top:622.99px;font-size:11px;line-height:11px;color:#f4f4f4;">6</div><div style="left:1370.00px;top:650.00px;width:648.00px;height:1.00px;background:#5a5a5a;"></div><div class="t" style="left:364.80px;width:1000px;text-align:right;top:645.99px;font-size:11px;line-height:11px;color:#f4f4f4;">4</div><div style="left:1370.00px;top:672.00px;width:648.00px;height:1.00px;background:#5a5a5a;"></div><div class="t" style="left:364.80px;width:1000px;text-align:right;top:667.99px;font-size:11px;line-height:11px;color:#f4f4f4;">2</div><div style="left:1370.00px;top:695.00px;width:648.00px;height:1.00px;background:#b4b4b4;"></div><div class="t" style="left:364.80px;width:1000px;text-align:right;top:690.99px;font-size:11px;line-height:11px;color:#f4f4f4;">0</div><div style="left:1370.00px;top:718.00px;width:648.00px;height:1.00px;background:#5a5a5a;"></div><div class="t" style="left:364.80px;width:1000px;text-align:right;top:713.99px;font-size:11px;line-height:11px;color:#f4f4f4;">-2</div><div style="left:1370.00px;top:740.00px;width:648.00px;height:1.00px;background:#5a5a5a;"></div><div class="t" style="left:364.80px;width:1000px;text-align:right;top:735.99px;font-size:11px;line-height:11px;color:#f4f4f4;">-4</div><div style="left:1370.00px;top:763.00px;width:648.00px;height:1.00px;background:#5a5a5a;"></div><div class="t" style="left:364.80px;width:1000px;text-align:right;top:758.99px;font-size:11px;line-height:11px;color:#f4f4f4;">-6</div><div style="left:1370.00px;top:786.00px;width:648.00px;height:1.00px;background:#5a5a5a;"></div><div class="t" style="left:364.80px;width:1000px;text-align:right;top:781.99px;font-size:11px;line-height:11px;color:#f4f4f4;">-8</div><div style="left:1370.00px;top:808.00px;width:648.00px;height:1.00px;background:#5a5a5a;"></div><div class="t" style="left:364.80px;width:1000px;text-align:right;top:803.99px;font-size:11px;line-height:11px;color:#f4f4f4;">-10</div><div style="left:1370.00px;top:831.00px;width:648.00px;height:1.00px;background:#5a5a5a;"></div><div class="t" style="left:364.80px;width:1000px;text-align:right;top:826.99px;font-size:11px;line-height:11px;color:#f4f4f4;">-12</div><div style="left:1370.00px;top:854.00px;width:648.00px;height:1.00px;background:#5a5a5a;"></div><div class="t" style="left:364.80px;width:1000px;text-align:right;top:849.99px;font-size:11px;line-height:11px;color:#f4f4f4;">-14</div><div style="left:1370.00px;top:876.00px;width:648.00px;height:1.00px;background:#5a5a5a;"></div><div class="t" style="left:364.80px;width:1000px;text-align:right;top:871.99px;font-size:11px;line-height:11px;color:#f4f4f4;">-16</div><div style="left:1370.00px;top:891.00px;width:648.00px;height:1.00px;background:#b4b4b4;"></div><div style="left:1370.00px;top:501.00px;width:1.00px;height:391.00px;background:#b4b4b4;"></div><div style="left:1694.00px;top:501.00px;width:1.00px;height:391.00px;background:#b4b4b4;"></div><div class="t" style="left:1193.50px;width:1000px;text-align:center;top:894.19px;font-size:11px;line-height:11px;color:#f4f4f4;">0</div><div class="t" style="left:1193.00px;width:1000px;text-align:center;top:917.19px;font-size:11px;line-height:11px;color:#f4f4f4;">(ms)</div><div style="left:1534.00px;top:66.00px;width:2.00px;height:391.00px;background:#6a6a36;"></div><div style="left:2006.80px;top:501.00px;width:2.00px;height:391.00px;background:#6a6a36;"></div><div style="left:2031.00px;top:4.00px;width:350.00px;height:242.00px;background:#393939;"></div><div style="left:2031.00px;top:249.00px;width:350.00px;height:149.00px;background:#393939;border-radius:2px 2px 0 0;"></div><div style="left:2031.00px;top:401.00px;width:350.00px;height:537.00px;background:#393939;"></div><div class="t" style="left:2039.60px;top:10.81px;font-size:10.5px;line-height:10.5px;color:#f4f4f4;">Signal Generator</div><svg style="left:2357.9px;top:8.9px;" width="12" height="12" viewBox="1035.9 7.9 12 12"><path d="M1037.8000000000002 9.8 L1046.0 18.0 M1046.0 9.8 L1037.8000000000002 18.0" stroke="#d8d8d8" stroke-width="1.3"/></svg><svg style="left:2046px;top:35px;" width="12" height="14" viewBox="724 34 12 14"><path d="M726 35.8 L734.2 41 L726 46.2 Z" fill="#fff"/></svg><div style="left:2031.00px;top:56.00px;width:335.00px;height:32.00px;background:#262626;"></div><svg style="left:2037px;top:69.3px;" width="9.2" height="6.2" viewBox="715 68.3 9.2 6.2"><path d="M716 69.3 L723.2 69.3 L719.6 73.5 Z" fill="#f0f0f0"/></svg><div class="t" style="left:2051.30px;top:65.73px;font-size:11.9px;line-height:11.9px;color:#fafafa;font-weight:bold;">Generator Settings</div><div class="t" style="left:2069.50px;top:97.30px;font-size:11.1px;line-height:11.1px;color:#f4f4f4;">Gen. Signal</div><div class="t" style="left:2136.00px;top:94.48px;font-size:11.6px;line-height:11.6px;color:#f4f4f4;">Square</div><div class="t" style="left:2069.50px;top:121.18px;font-size:11.6px;line-height:11.6px;color:#f4f4f4;">Axis</div><div class="t" style="left:2136.00px;top:118.78px;font-size:11.6px;line-height:11.6px;color:#f4f4f4;">Axis 1</div><div class="t" style="left:2069.50px;top:145.14px;font-size:12px;line-height:12px;color:#f4f4f4;">Signal</div><div class="t" style="left:2136.00px;top:143.08px;font-size:11.6px;line-height:11.6px;color:#f4f4f4;">Current direct set-point</div><div class="t" style="left:2069.50px;top:169.78px;font-size:11.6px;line-height:11.6px;color:#f4f4f4;">Frequency</div><div class="t" style="left:2136.00px;top:167.38px;font-size:11.6px;line-height:11.6px;color:#f4f4f4;">200</div><div class="t" style="left:2321.10px;top:168.24px;font-size:12px;line-height:12px;color:#f4f4f4;">Hz</div><div class="t" style="left:2069.50px;top:194.08px;font-size:11.6px;line-height:11.6px;color:#f4f4f4;">Amplitude</div><div class="t" style="left:2136.00px;top:191.68px;font-size:11.6px;line-height:11.6px;color:#f4f4f4;">1</div><div class="t" style="left:2321.10px;top:192.54px;font-size:12px;line-height:12px;color:#f4f4f4;">A</div><div class="t" style="left:2069.50px;top:218.38px;font-size:11.6px;line-height:11.6px;color:#f4f4f4;">Offset</div><div class="t" style="left:2136.00px;top:215.98px;font-size:11.6px;line-height:11.6px;color:#f4f4f4;">0</div><div class="t" style="left:2321.10px;top:216.84px;font-size:12px;line-height:12px;color:#f4f4f4;">A</div><svg style="left:2351.7px;top:142.5px;" width="14" height="12" viewBox="1029.7 141.5 14 12"><path d="M1030.7 146.5 L1035.7 142.5 L1035.7 144.4 C1039.5 144.3 1042.2 146.0 1042.0 149.2 C1041.9 150.5 1041.2 151.5 1040.5 152.3 C1040.3 150.0 1039.0 148.2 1035.7 148.2 L1035.7 150.2 Z" fill="#f8f8f8"/></svg><svg style="left:2351.7px;top:191.5px;" width="14" height="12" viewBox="1029.7 190.5 14 12"><path d="M1030.7 195.5 L1035.7 191.5 L1035.7 193.4 C1039.5 193.3 1042.2 195.0 1042.0 198.2 C1041.9 199.5 1041.2 200.5 1040.5 201.3 C1040.3 199.0 1039.0 197.2 1035.7 197.2 L1035.7 199.2 Z" fill="#f8f8f8"/></svg><svg style="left:2367px;top:59.3px;" width="12" height="9" viewBox="1045 58.3 12 9"><path d="M1046.8 66.3 L1055.2 66.3 L1051 59.3 Z" fill="#8a8a8a"/></svg><div style="left:2369.00px;top:70.80px;width:9.00px;height:158.20px;background:#646464;border-radius:4.5px;"></div><svg style="left:2367px;top:233.5px;" width="12" height="9" viewBox="1045 232.5 12 9"><path d="M1046.8 233.5 L1055.2 233.5 L1051 240.5 Z" fill="#8a8a8a"/></svg><div class="t" style="left:2040.60px;top:256.11px;font-size:10.5px;line-height:10.5px;color:#f4f4f4;">Display</div><svg style="left:2357.8px;top:254.39999999999998px;" width="12" height="12" viewBox="1035.8 253.39999999999998 12 12"><path d="M1037.7 255.29999999999998 L1045.8999999999999 263.5 M1045.8999999999999 255.29999999999998 L1037.7 263.5" stroke="#d8d8d8" stroke-width="1.3"/></svg><div style="left:2041.00px;top:282.60px;width:3.60px;height:9.00px;background:#f4f4f4;border-radius:0.8px;"></div><div style="left:2045.70px;top:282.60px;width:3.60px;height:9.00px;background:#f4f4f4;border-radius:0.8px;"></div><svg style="left:2360.7px;top:281.2px;" width="12" height="12" viewBox="1038.7 280.2 12 12"><rect x="1040.4" y="282.0" width="8.6" height="1.6" fill="#f4f4f4"/><rect x="1043.1000000000001" y="281.2" width="3.2" height="1.2" fill="#f4f4f4"/><path d="M1041.2 284.2 L1048.2 284.2 L1047.7 290.8 L1041.7 290.8 Z" fill="#f4f4f4"/></svg><div style="left:2031.00px;top:301.00px;width:335.00px;height:34.50px;background:#1c1c1c;"></div><div class="t" style="left:2040.60px;top:313.62px;font-size:11.2px;line-height:11.2px;color:#f4f4f4;">0x01</div><div class="t" style="left:2070.80px;top:313.53px;font-size:11.3px;line-height:11.3px;color:#fafafa;font-weight:bold;">CAP-NET-E - Drive</div><svg style="left:2350.8px;top:315.9px;" width="10.7" height="6.4" viewBox="1028.8 314.9 10.7 6.4"><path d="M1029.8 315.9 L1038.5 315.9 L1034.1499999999999 320.29999999999995 Z" fill="#f0f0f0"/></svg><div style="left:2031.00px;top:336.00px;width:335.00px;height:29.50px;background:#2a2a2a;"></div><div class="t" style="left:1633.50px;width:1000px;text-align:center;top:345.64px;font-size:12px;line-height:12px;color:#fafafa;font-weight:bold;">Parameter</div><div style="left:2242.6px;top:346.8px;width:8.6px;height:8.6px;border-radius:50%;background:#ffff00;"></div><div class="t" style="left:2265.20px;top:346.57px;font-size:10.9px;line-height:10.9px;color:#fafafa;font-weight:bold;">Axis 1</div><div class="t" style="left:2326.30px;top:345.98px;font-size:11.6px;line-height:11.6px;color:#fafafa;font-weight:bold;">Units</div><div style="left:2031.00px;top:365.00px;width:335.00px;height:25.00px;background:#2b2b2b;"></div><div style="left:2032.00px;top:366.00px;width:203.00px;height:23.00px;background:#393939;"></div><div style="left:2236.00px;top:366.00px;width:79.00px;height:23.00px;background:#393939;"></div><div style="left:2316.00px;top:366.00px;width:49.00px;height:23.00px;background:#393939;"></div><div class="t" style="left:2044.30px;top:371.64px;font-size:12px;line-height:12px;color:#f4f4f4;">Current loop rate</div><div class="t" style="left:1311.70px;width:1000px;text-align:right;top:372.41px;font-size:10.5px;line-height:10.5px;color:#8c8c8c;">20000</div><div class="t" style="left:2319.10px;top:371.64px;font-size:12px;line-height:12px;color:#f4f4f4;">Hz</div><svg style="left:2367px;top:303.8px;" width="12" height="9" viewBox="1045 302.8 12 9"><path d="M1046.8 310.8 L1055.2 310.8 L1051 303.8 Z" fill="#8a8a8a"/></svg><div style="left:2369.00px;top:315.80px;width:9.00px;height:67.20px;background:#2e2e2e;border-radius:4.5px;"></div><div style="left:2369.00px;top:315.80px;width:9.00px;height:50.20px;background:#646464;border-radius:4.5px;"></div><svg style="left:2367px;top:385px;" width="12" height="9" viewBox="1045 384 12 9"><path d="M1046.8 385 L1055.2 385 L1051 392 Z" fill="#8a8a8a"/></svg><div class="t" style="left:2040.60px;top:408.21px;font-size:10.5px;line-height:10.5px;color:#f4f4f4;">Control</div><svg style="left:2357.8px;top:406.1px;" width="12" height="12" viewBox="1035.8 405.1 12 12"><path d="M1037.7 407.0 L1045.8999999999999 415.20000000000005 M1045.8999999999999 407.0 L1037.7 415.20000000000005" stroke="#d8d8d8" stroke-width="1.3"/></svg><svg style="left:2360.7px;top:433.2px;" width="12" height="12" viewBox="1038.7 432.2 12 12"><rect x="1040.4" y="434.0" width="8.6" height="1.6" fill="#f4f4f4"/><rect x="1043.1000000000001" y="433.2" width="3.2" height="1.2" fill="#f4f4f4"/><path d="M1041.2 436.2 L1048.2 436.2 L1047.7 442.8 L1041.7 442.8 Z" fill="#f4f4f4"/></svg><div style="left:2031.00px;top:453.00px;width:335.00px;height:34.50px;background:#1c1c1c;"></div><div class="t" style="left:2040.60px;top:465.62px;font-size:11.2px;line-height:11.2px;color:#f4f4f4;">0x01</div><div class="t" style="left:2070.80px;top:465.53px;font-size:11.3px;line-height:11.3px;color:#fafafa;font-weight:bold;">CAP-NET-E - Drive</div><svg style="left:2350.8px;top:467.9px;" width="10.7" height="6.4" viewBox="1028.8 466.9 10.7 6.4"><path d="M1029.8 467.9 L1038.5 467.9 L1034.1499999999999 472.29999999999995 Z" fill="#f0f0f0"/></svg><div style="left:2031.00px;top:488.00px;width:335.00px;height:29.50px;background:#2a2a2a;"></div><div class="t" style="left:1633.50px;width:1000px;text-align:center;top:497.64px;font-size:12px;line-height:12px;color:#fafafa;font-weight:bold;">Parameter</div><div style="left:2242.6px;top:498.8px;width:8.6px;height:8.6px;border-radius:50%;background:#ffff00;"></div><div class="t" style="left:2265.20px;top:498.57px;font-size:10.9px;line-height:10.9px;color:#fafafa;font-weight:bold;">Axis 1</div><div class="t" style="left:2326.30px;top:497.98px;font-size:11.6px;line-height:11.6px;color:#fafafa;font-weight:bold;">Units</div><svg style="left:2037px;top:523px;" width="9.2" height="6.2" viewBox="715 522 9.2 6.2"><path d="M716 523 L723.2 523 L719.6 527.2 Z" fill="#f0f0f0"/></svg><div class="t" style="left:2054.40px;top:520.74px;font-size:12px;line-height:12px;color:#f4f4f4;">Control Buttons</div><div style="left:2031.00px;top:535.00px;width:335.00px;height:27.00px;background:#2b2b2b;"></div><div style="left:2032.00px;top:536.00px;width:203.00px;height:25.00px;background:#393939;"></div><div style="left:2236.00px;top:536.00px;width:79.00px;height:25.00px;background:#393939;"></div><div style="left:2316.00px;top:536.00px;width:49.00px;height:25.00px;background:#393939;"></div><div class="t" style="left:2049.30px;top:542.74px;font-size:12px;line-height:12px;color:#f4f4f4;">Tune</div><div style="left:2241.00px;top:540.00px;width:70.00px;height:16.80px;background:#4a4a4a;border-radius:2px;"></div><div class="t" style="left:1776.00px;width:1000px;text-align:center;top:543.80px;font-size:10.4px;line-height:10.4px;color:#f4f4f4;">Enable</div><div style="left:2031.00px;top:561.00px;width:335.00px;height:27.00px;background:#2b2b2b;"></div><div style="left:2032.00px;top:562.00px;width:203.00px;height:25.00px;background:#393939;"></div><div style="left:2236.00px;top:562.00px;width:79.00px;height:25.00px;background:#393939;"></div><div style="left:2316.00px;top:562.00px;width:49.00px;height:25.00px;background:#393939;"></div><div class="t" style="left:2049.30px;top:568.74px;font-size:12px;line-height:12px;color:#f4f4f4;">Fault Reset</div><div style="left:2241.00px;top:566.00px;width:70.00px;height:16.80px;background:#4a4a4a;border-radius:2px;"></div><div class="t" style="left:1776.00px;width:1000px;text-align:center;top:569.80px;font-size:10.4px;line-height:10.4px;color:#f4f4f4;">Enable</div><svg style="left:2037px;top:593px;" width="9.2" height="6.2" viewBox="715 592 9.2 6.2"><path d="M716 593 L723.2 593 L719.6 597.2 Z" fill="#f0f0f0"/></svg><div class="t" style="left:2054.40px;top:590.74px;font-size:12px;line-height:12px;color:#f4f4f4;">Targets</div><div style="left:2031.00px;top:605.00px;width:335.00px;height:27.00px;background:#2b2b2b;"></div><div style="left:2032.00px;top:606.00px;width:203.00px;height:25.00px;background:#393939;"></div><div style="left:2236.00px;top:606.00px;width:79.00px;height:25.00px;background:#393939;"></div><div style="left:2316.00px;top:606.00px;width:49.00px;height:25.00px;background:#393939;"></div><div class="t" style="left:2049.30px;top:612.74px;font-size:12px;line-height:12px;color:#f4f4f4;">Operation mode</div><div class="t" style="left:1311.50px;width:1000px;text-align:right;top:612.44px;font-size:12px;line-height:12px;color:#f4f4f4;">Current</div><div class="t" style="left:2319.00px;top:612.74px;font-size:12px;line-height:12px;color:#f4f4f4;">-</div><svg style="left:2037px;top:637px;" width="9.2" height="6.2" viewBox="715 636 9.2 6.2"><path d="M716 637 L723.2 637 L719.6 641.2 Z" fill="#f0f0f0"/></svg><div class="t" style="left:2054.40px;top:634.74px;font-size:12px;line-height:12px;color:#f4f4f4;">Control loop</div><div style="left:2031.00px;top:649.00px;width:335.00px;height:27.00px;background:#2b2b2b;"></div><div style="left:2032.00px;top:650.00px;width:203.00px;height:25.00px;background:#393939;"></div><div style="left:2236.00px;top:650.00px;width:79.00px;height:25.00px;background:#393939;"></div><div style="left:2316.00px;top:650.00px;width:49.00px;height:25.00px;background:#393939;"></div><div class="t" style="left:2049.30px;top:656.74px;font-size:12px;line-height:12px;color:#f4f4f4;">Current direct loop Kp</div><div class="t" style="left:1311.50px;width:1000px;text-align:right;top:657.63px;font-size:10.6px;line-height:10.6px;color:#f4f4f4;">7.764432</div><div class="t" style="left:2319.00px;top:656.74px;font-size:12px;line-height:12px;color:#f4f4f4;">V/A</div><div style="left:2031.00px;top:675.00px;width:335.00px;height:27.00px;background:#2b2b2b;"></div><div style="left:2032.00px;top:676.00px;width:203.00px;height:25.00px;background:#393939;"></div><div style="left:2236.00px;top:676.00px;width:79.00px;height:25.00px;background:#393939;"></div><div style="left:2316.00px;top:676.00px;width:49.00px;height:25.00px;background:#393939;"></div><div class="t" style="left:2049.30px;top:682.74px;font-size:12px;line-height:12px;color:#f4f4f4;">Current direct loop Ki</div><div class="t" style="left:1311.50px;width:1000px;text-align:right;top:683.63px;font-size:10.6px;line-height:10.6px;color:#f4f4f4;">468.484741</div><div class="t" style="left:2319.00px;top:682.74px;font-size:12px;line-height:12px;color:#f4f4f4;">Hz</div><div style="left:2031.00px;top:701.00px;width:335.00px;height:27.00px;background:#2b2b2b;"></div><div style="left:2032.00px;top:702.00px;width:203.00px;height:25.00px;background:#393939;"></div><div style="left:2236.00px;top:702.00px;width:79.00px;height:25.00px;background:#393939;"></div><div style="left:2316.00px;top:702.00px;width:49.00px;height:25.00px;background:#393939;"></div><div class="t" style="left:2049.30px;top:708.74px;font-size:12px;line-height:12px;color:#f4f4f4;">Current quadrature loop Kp</div><div class="t" style="left:1311.50px;width:1000px;text-align:right;top:709.63px;font-size:10.6px;line-height:10.6px;color:#f4f4f4;">7.764432</div><div class="t" style="left:2319.00px;top:708.74px;font-size:12px;line-height:12px;color:#f4f4f4;">V/A</div><div style="left:2031.00px;top:727.00px;width:335.00px;height:27.00px;background:#2b2b2b;"></div><div style="left:2032.00px;top:728.00px;width:203.00px;height:25.00px;background:#393939;"></div><div style="left:2236.00px;top:728.00px;width:79.00px;height:25.00px;background:#393939;"></div><div style="left:2316.00px;top:728.00px;width:49.00px;height:25.00px;background:#393939;"></div><div class="t" style="left:2049.30px;top:734.74px;font-size:12px;line-height:12px;color:#f4f4f4;">Current quadrature loop Ki</div><div class="t" style="left:1311.50px;width:1000px;text-align:right;top:735.63px;font-size:10.6px;line-height:10.6px;color:#f4f4f4;">468.484741</div><div class="t" style="left:2319.00px;top:734.74px;font-size:12px;line-height:12px;color:#f4f4f4;">Hz</div><div style="left:2031.00px;top:753.00px;width:335.00px;height:27.00px;background:#2b2b2b;"></div><div style="left:2032.00px;top:754.00px;width:203.00px;height:25.00px;background:#393939;"></div><div style="left:2236.00px;top:754.00px;width:79.00px;height:25.00px;background:#393939;"></div><div style="left:2316.00px;top:754.00px;width:49.00px;height:25.00px;background:#393939;"></div><div class="t" style="left:2049.30px;top:760.74px;font-size:12px;line-height:12px;color:#f4f4f4;">Current direct loop max. out</div><div class="t" style="left:1311.50px;width:1000px;text-align:right;top:761.63px;font-size:10.6px;line-height:10.6px;color:#f4f4f4;">48.0</div><div class="t" style="left:2319.00px;top:760.74px;font-size:12px;line-height:12px;color:#f4f4f4;">V</div><div style="left:2031.00px;top:779.00px;width:335.00px;height:27.00px;background:#2b2b2b;"></div><div style="left:2032.00px;top:780.00px;width:203.00px;height:25.00px;background:#393939;"></div><div style="left:2236.00px;top:780.00px;width:79.00px;height:25.00px;background:#393939;"></div><div style="left:2316.00px;top:780.00px;width:49.00px;height:25.00px;background:#393939;"></div><div class="t" style="left:2049.30px;top:786.74px;font-size:12px;line-height:12px;color:#f4f4f4;">Current direct loop min. out</div><div class="t" style="left:1311.50px;width:1000px;text-align:right;top:787.63px;font-size:10.6px;line-height:10.6px;color:#f4f4f4;">-48.0</div><div class="t" style="left:2319.00px;top:786.74px;font-size:12px;line-height:12px;color:#f4f4f4;">V</div><div style="left:2031.00px;top:805.00px;width:335.00px;height:27.00px;background:#2b2b2b;"></div><div style="left:2032.00px;top:806.00px;width:203.00px;height:25.00px;background:#393939;"></div><div style="left:2236.00px;top:806.00px;width:79.00px;height:25.00px;background:#393939;"></div><div style="left:2316.00px;top:806.00px;width:49.00px;height:25.00px;background:#393939;"></div><div class="t" style="left:2049.30px;top:812.74px;font-size:12px;line-height:12px;color:#f4f4f4;">Current quadrature loop max. out</div><div class="t" style="left:1311.50px;width:1000px;text-align:right;top:813.63px;font-size:10.6px;line-height:10.6px;color:#f4f4f4;">48.0</div><div class="t" style="left:2319.00px;top:812.74px;font-size:12px;line-height:12px;color:#f4f4f4;">V</div><div style="left:2031.00px;top:831.00px;width:335.00px;height:27.00px;background:#2b2b2b;"></div><div style="left:2032.00px;top:832.00px;width:203.00px;height:25.00px;background:#393939;"></div><div style="left:2236.00px;top:832.00px;width:79.00px;height:25.00px;background:#393939;"></div><div style="left:2316.00px;top:832.00px;width:49.00px;height:25.00px;background:#393939;"></div><div class="t" style="left:2049.30px;top:838.74px;font-size:12px;line-height:12px;color:#f4f4f4;">Current quadrature loop min. out</div><div class="t" style="left:1311.50px;width:1000px;text-align:right;top:839.63px;font-size:10.6px;line-height:10.6px;color:#f4f4f4;">-48.0</div><div class="t" style="left:2319.00px;top:838.74px;font-size:12px;line-height:12px;color:#f4f4f4;">V</div><svg style="left:2037px;top:863px;" width="9.2" height="6.2" viewBox="715 862 9.2 6.2"><path d="M716 863 L723.2 863 L719.6 867.2 Z" fill="#f0f0f0"/></svg><div class="t" style="left:2054.40px;top:860.74px;font-size:12px;line-height:12px;color:#f4f4f4;">Limits</div><div style="left:2031.00px;top:875.00px;width:335.00px;height:27.00px;background:#2b2b2b;"></div><div style="left:2032.00px;top:876.00px;width:203.00px;height:25.00px;background:#393939;"></div><div style="left:2236.00px;top:876.00px;width:79.00px;height:25.00px;background:#393939;"></div><div style="left:2316.00px;top:876.00px;width:49.00px;height:25.00px;background:#393939;"></div><div class="t" style="left:2049.30px;top:882.74px;font-size:12px;line-height:12px;color:#f4f4f4;">Max. current</div><div class="t" style="left:1311.50px;width:1000px;text-align:right;top:883.63px;font-size:10.6px;line-height:10.6px;color:#f4f4f4;">10.0</div><div class="t" style="left:2319.00px;top:882.74px;font-size:12px;line-height:12px;color:#f4f4f4;">A</div><svg style="left:2367px;top:456.2px;" width="12" height="9" viewBox="1045 455.2 12 9"><path d="M1046.8 463.2 L1055.2 463.2 L1051 456.2 Z" fill="#8a8a8a"/></svg><div style="left:2369.00px;top:468.00px;width:9.00px;height:455.70px;background:#2e2e2e;border-radius:4.5px;"></div><div style="left:2369.00px;top:468.00px;width:9.00px;height:434.00px;background:#646464;border-radius:4.5px;"></div><svg style="left:2367px;top:926px;" width="12" height="9" viewBox="1045 925 12 9"><path d="M1046.8 926 L1055.2 926 L1051 933 Z" fill="#8a8a8a"/></svg><svg style="left:1370px;top:60px" width="660" height="840" viewBox="1370 60 660 840"><polyline points="1393.0,163.5 1428.5,163.5 1433.5,358.3 1559.3,358.3 1564.3,163.5 1686.0,163.5 1690.5,358.3 1812.2,358.3 1816.5,163.5 1938.7,163.5 1942.4,358.3 1993.3,358.3" fill="none" stroke="#ff0000" stroke-width="1.1"/><polyline points="1393.0,160.5 1405.0,163.5 1410.0,164.5 1415.0,164.5 1418.0,163.5 1439.5,163.5 1440.5,190.0 1444.5,280.0 1447.0,300.0 1448.5,320.0 1451.5,340.0 1453.5,350.0 1458.0,356.0 1460.9,358.3 1464.5,360.3 1468.0,361.3 1481.0,361.3 1484.0,360.3 1488.0,361.3 1505.0,361.3 1507.0,360.0 1512.0,360.0 1514.0,361.0 1530.0,360.5 1550.0,358.5 1565.5,358.3 1566.5,340.0 1568.5,300.0 1571.8,261.0 1575.7,202.0 1579.5,182.0 1582.5,173.0 1585.9,168.0 1591.5,163.5 1600.5,161.5 1615.5,160.3 1640.0,161.0 1660.0,162.5 1686.0,163.2 1689.0,163.5 1691.6,163.5 1692.6,185.0 1694.6,230.0 1697.7,261.0 1700.6,300.0 1705.2,341.0 1708.6,351.0 1711.6,356.0 1715.6,358.5 1719.6,360.0 1723.6,360.8 1780.0,360.5 1800.0,359.5 1815.0,358.5 1820.5,358.3 1821.5,340.0 1823.5,300.0 1826.8,261.0 1830.7,202.0 1834.5,182.0 1837.5,173.0 1840.9,168.0 1846.5,163.5 1855.5,161.5 1870.5,160.3 1878.0,159.5 1890.0,161.5 1920.0,162.5 1940.0,163.0 1943.0,162.3 1946.0,163.5 1947.9,163.5 1948.9,185.0 1952.3,261.5 1956.8,318.7 1962.3,348.4 1969.7,357.1 1978.4,361.3 1988.3,361.8 1994.0,359.6" fill="none" stroke="#00ffff" stroke-width="1.1"/><polyline points="1393.5,690.0 1410.0,688.5 1420.0,688.0 1433.0,688.4 1434.5,692.0 1434.8,727.0 1435.5,765.0 1436.3,802.0 1437.5,837.0 1438.8,872.0 1440.0,836.0 1441.7,801.0 1443.8,765.0 1448.2,733.0 1452.5,712.3 1459.0,704.7 1467.7,702.0 1480.0,701.0 1520.0,700.5 1545.0,701.5 1559.5,702.0 1560.9,665.0 1562.3,629.0 1563.4,593.0 1564.1,557.6 1565.7,522.4 1566.4,525.0 1568.9,557.6 1570.9,593.0 1572.9,628.8 1575.4,650.0 1579.2,671.2 1583.9,681.0 1591.6,687.7 1599.9,689.5 1605.9,690.5 1611.9,689.5 1640.0,689.0 1684.8,688.4 1686.3,692.0 1686.6,727.0 1687.3,765.0 1688.1,802.0 1689.3,837.0 1690.6,872.0 1691.8,836.0 1693.5,801.0 1695.6,765.0 1700.0,733.0 1704.3,712.3 1710.8,704.7 1719.5,702.0 1731.8,701.0 1780.0,700.5 1816.7,702.0 1818.1,665.0 1819.5,629.0 1820.6,593.0 1821.3,557.6 1822.9,522.4 1823.6,525.0 1826.1,557.6 1828.1,593.0 1830.1,628.8 1832.6,650.0 1836.4,671.2 1841.1,681.0 1848.8,687.7 1857.1,689.5 1863.1,690.5 1869.1,689.5 1878.0,691.0 1900.0,688.5 1941.5,688.4 1943.0,692.0 1943.3,727.0 1944.0,765.0 1944.8,802.0 1946.0,837.0 1947.3,872.0 1948.5,836.0 1950.2,801.0 1952.3,765.0 1956.7,733.0 1961.0,712.3 1967.5,704.7 1976.2,702.0 1988.5,701.0 1994.5,700.5" fill="none" stroke="#80ff00" stroke-width="1.25"/></svg><div style="left:1799.00px;top:79.00px;width:209.00px;height:49.00px;background:#000;border:1px solid #707070;"></div><div class="t" style="left:1802.70px;top:81.69px;font-size:11px;line-height:11px;color:#ffffff;">x = -0.0032</div><div class="t" style="left:1802.70px;top:96.69px;font-size:11px;line-height:11px;color:#ff0000;">Current direct demand (Axis 1) = -1.0000</div><div class="t" style="left:1802.70px;top:111.69px;font-size:11px;line-height:11px;color:#00ffff;">Current direct value (Axis 1) = -1.0193</div><div style="left:1787.00px;top:514.00px;width:221.00px;height:34.00px;background:#000;border:1px solid #707070;"></div><div class="t" style="left:1790.60px;top:516.69px;font-size:11px;line-height:11px;color:#ffffff;">x = 0.0063</div><div class="t" style="left:1790.60px;top:531.69px;font-size:11px;line-height:11px;color:#80ff00;">Voltage direct command (Axis 1) = -0.5370</div><svg style="left:0;top:0" width="2382" height="968" viewBox="0 0 2382 968"><polygon points="858.1,488.6 906.3,523.7 912.6,515.9 918.6,538.9 895.2,539.9 900.4,531.7 852.3,495.4" fill="#0080ff" stroke="#000" stroke-width="1.3" stroke-linejoin="miter"/><polygon points="2165.3,451.8 2232.6,523.9 2240.3,517.6 2242.5,540.3 2218.3,537.2 2226.1,531.2 2159,458.1" fill="#ff0000" stroke="#000" stroke-width="1.3"/><polygon points="1083.1,470.4 1273,470.4 1273,460.7 1290.9,475.1 1273,489.6 1273,479.8 1083.1,479.8" fill="#ff0000"/></svg>
</body></html>
